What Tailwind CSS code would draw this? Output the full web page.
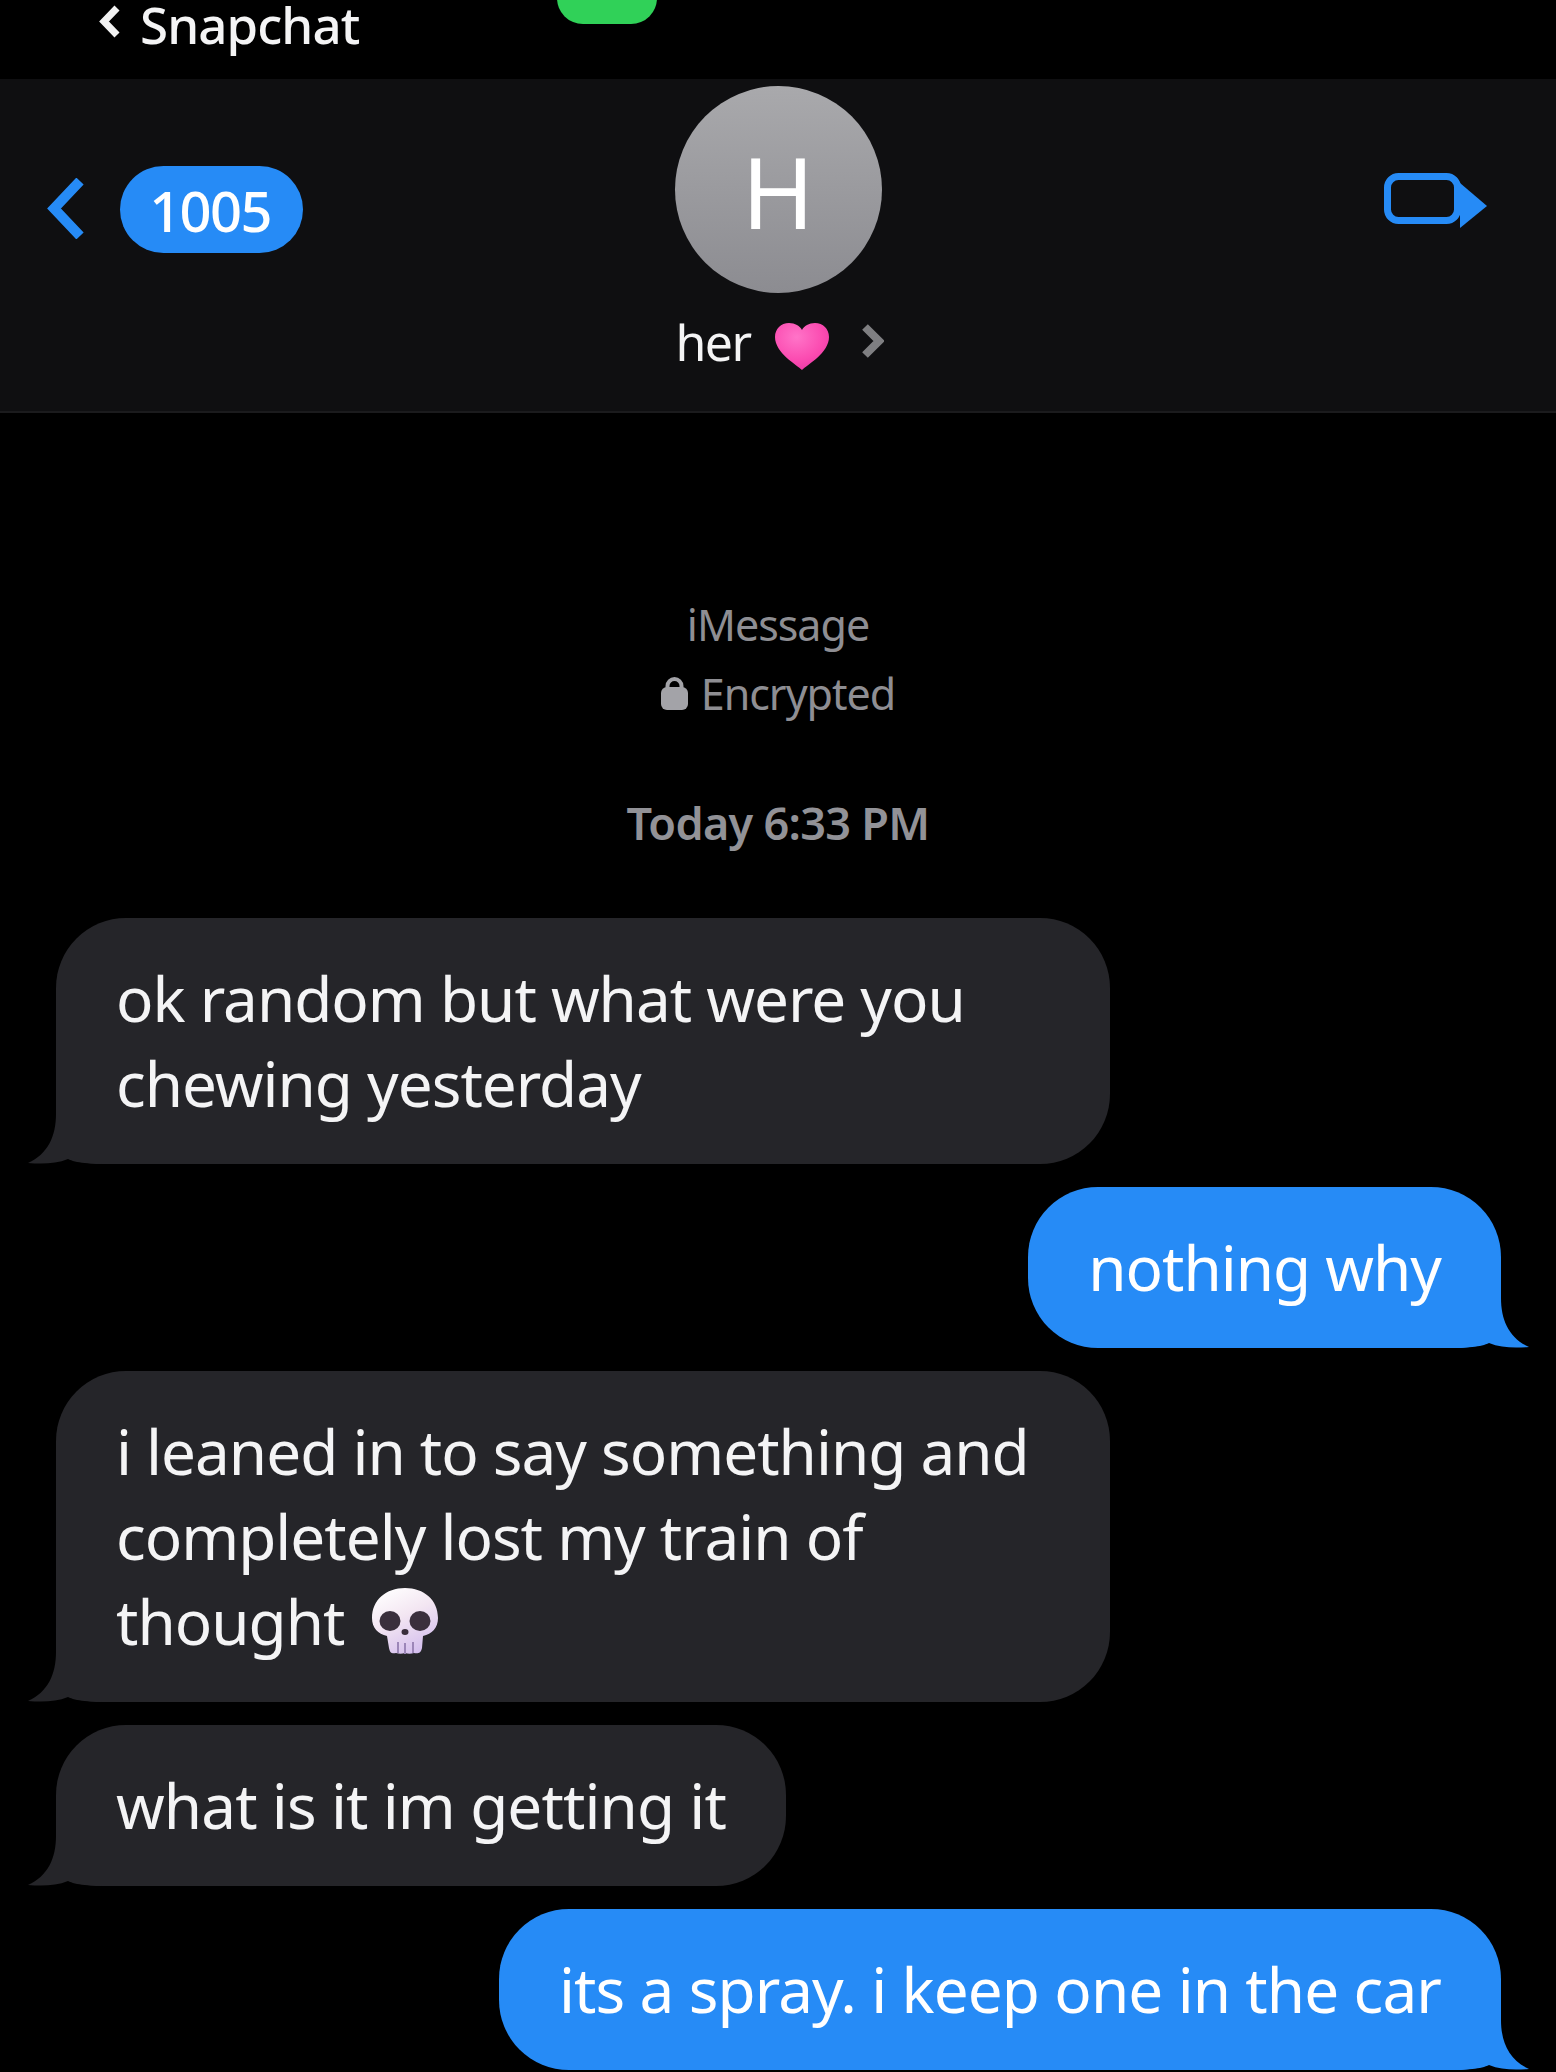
<!DOCTYPE html>
<html lang="en">
<head>
  <meta charset="UTF-8" />
  <meta name="viewport" content="width=device-width,initial-scale=1" />
  <title>Messages</title>
  <script src="https://cdn.jsdelivr.net/npm/@tailwindcss/browser@4"></script>
</head>
<body class="bg-black">
  <div class="w-[1556px] h-[2072px] overflow-hidden bg-black text-[#f4f4f5] font-['Noto_Sans',sans-serif]">

    <!-- status bar -->
    <div class="relative h-[79px] flex items-start pl-[98px]">
      <svg class="mt-[5px] w-[23px] h-[33px]" viewBox="0 0 23 33" fill="none"><path d="M19 3 L6 16.5 L19 30" stroke="#f2f2f2" stroke-width="7"/></svg>
      <span class="ml-[19px] text-[51px] leading-[48px] font-medium tracking-[-0.9px]">Snapchat</span>
      <div class="absolute left-[557px] -top-[30px] w-[100px] h-[54px] rounded-[26px] bg-[#30d158]"></div>
    </div>

    <!-- nav header -->
    <header class="h-[334px] bg-[#0f0f11] border-b-2 border-[#1b1b1d] grid grid-cols-[400px_1fr_400px]">
      <div class="flex items-start pl-[47px] pt-[87px]">
        <svg class="mt-[12px] w-[37px] h-[61px]" viewBox="0 0 37 61" fill="none"><path d="M33 3 L7 30.5 L33 58" stroke="#268bf6" stroke-width="10"/></svg>
        <span class="ml-[36px] w-[183px] h-[87px] rounded-full bg-[#268bf6] text-white text-[56px] leading-[89px] font-medium text-center tracking-[-1.6px] pr-[3px]">1005</span>
      </div>
      <div class="flex flex-col items-center pt-[7px]">
        <div class="w-[207px] h-[207px] rounded-full bg-gradient-to-b from-[#a9a9ac] to-[#8c8c91] flex items-center justify-center text-white text-[98px] leading-none font-normal pt-[2px]">H</div>
        <div class="mt-[15px] flex items-center pl-[4px]">
          <span class="text-[50px] leading-[68px] tracking-[-1.6px]">her</span>
          <svg class="ml-[25px] mt-[8px] w-[54px] h-[47px]" viewBox="0 0 54 47">
            <defs>
              <radialGradient id="heart" cx="0.4" cy="0.3" r="0.8"><stop offset="0" stop-color="#ff74c8"/><stop offset="0.6" stop-color="#fb4cb1"/><stop offset="1" stop-color="#e935a4"/></radialGradient>
            </defs>
            <path d="M27 47 C22 42 0 30 0 14 C0 6 6 0 14 0 C20 0 25 3 27 7 C29 3 34 0 40 0 C48 0 54 6 54 14 C54 30 32 42 27 47 Z" fill="url(#heart)"/>
          </svg>
          <svg class="ml-[32px] -mt-[3px] w-[23px] h-[34px]" viewBox="0 0 23 34" fill="none"><path d="M4 3 L18 17 L4 31" stroke="#7f7f82" stroke-width="8"/></svg>
        </div>
      </div>
      <div class="flex justify-end pr-[69px] pt-[94px]">
        <svg class="w-[103px] h-[55px]" viewBox="0 0 103 55">
          <rect x="3.5" y="3.5" width="70" height="44" rx="11" fill="none" stroke="#268bf6" stroke-width="7"/>
          <path d="M76 10 L103 33 L76 55 Z" fill="#268bf6"/>
        </svg>
      </div>
    </header>

    <!-- encryption note and time -->
    <div class="pt-[177px] flex flex-col items-center text-[#8e8e93]">
      <div class="text-[43px] leading-[69px] tracking-[-1px]">iMessage</div>
      <div class="flex items-center">
        <svg class="w-[27px] h-[33px] mr-[13px]" viewBox="0 0 27 33">
          <path d="M6.5 14 V9 a7 7 0 0 1 14 0 V14" fill="none" stroke="#a3a3a8" stroke-width="4"/>
          <rect x="0" y="10" width="27" height="23" rx="6" fill="#a3a3a8"/>
        </svg>
        <span class="text-[43px] leading-[69px] tracking-[-1px]">Encrypted</span>
      </div>
      <div class="mt-[60px] text-[45px] leading-[69px] font-semibold tracking-[-0.7px] text-[#929297]">Today 6:33 PM</div>
    </div>

    <!-- messages -->
    <main class="mt-[61px] flex flex-col gap-[23px] text-[62px] leading-[85px] tracking-[-1px]">
      <div class="relative self-start ml-[56px] w-[1054px] py-[38px] px-[60px] rounded-[70px] rounded-bl-[40px] bg-[#252529]">
        ok random but what were you<br />chewing yesterday
        <svg class="absolute -left-[28px] bottom-0 w-[90px] h-[50px]" viewBox="0 0 90 50"><path d="M28 0 C28 22 20 40 0 49 C14 50 28 50 40 45 C48 49 60 50 90 50 L90 0 Z" fill="#252529"/></svg>
      </div>
      <div class="relative self-end mr-[55px] py-[38px] px-[60px] rounded-[70px] rounded-br-[40px] bg-[#268bf6] text-white">
        nothing why
        <svg class="absolute -right-[28px] bottom-0 w-[90px] h-[50px]" viewBox="0 0 90 50"><path d="M62 0 C62 22 70 40 90 49 C76 50 62 50 50 45 C42 49 30 50 0 50 L0 0 Z" fill="#268bf6"/></svg>
      </div>
      <div class="relative self-start ml-[56px] w-[1054px] py-[38px] px-[60px] rounded-[70px] rounded-bl-[40px] bg-[#252529]">
        i leaned in to say something and<br />completely lost my train of<br />thought
        <svg class="inline-block ml-[13px] -mt-[14px] w-[66px] h-[66px] align-middle" viewBox="0 0 66 66">
          <defs>
            <linearGradient id="skull" x1="0.2" y1="0" x2="0.7" y2="1"><stop offset="0" stop-color="#ffffff"/><stop offset="0.45" stop-color="#f3e6f2"/><stop offset="1" stop-color="#d3bdee"/></linearGradient>
          </defs>
          <path d="M33 0 C52 0 66 12 66 30 C66 40 60 46 51 48 L50 60 C49 65 46 66 42 65 C39 66 36 66 33 65 C30 66 27 66 24 65 C20 66 18 65 17 60 L15 48 C6 46 0 40 0 30 C0 12 14 0 33 0 Z" fill="url(#skull)"/>
          <ellipse cx="18" cy="33" rx="10.5" ry="10" fill="#3a2f3c"/>
          <ellipse cx="48" cy="33" rx="10.5" ry="10" fill="#3a2f3c"/>
          <ellipse cx="33" cy="44" rx="3.5" ry="3" fill="#3a2f3c"/>
          <path d="M26 54 V65 M33 55 V66 M41 54 V65" stroke="#9c86b8" stroke-width="2"/>
        </svg>
        <svg class="absolute -left-[28px] bottom-0 w-[90px] h-[50px]" viewBox="0 0 90 50"><path d="M28 0 C28 22 20 40 0 49 C14 50 28 50 40 45 C48 49 60 50 90 50 L90 0 Z" fill="#252529"/></svg>
      </div>
      <div class="relative self-start ml-[56px] py-[38px] px-[60px] rounded-[70px] rounded-bl-[40px] bg-[#252529] tracking-[-0.9px]">
        what is it im getting it
        <svg class="absolute -left-[28px] bottom-0 w-[90px] h-[50px]" viewBox="0 0 90 50"><path d="M28 0 C28 22 20 40 0 49 C14 50 28 50 40 45 C48 49 60 50 90 50 L90 0 Z" fill="#252529"/></svg>
      </div>
      <div class="relative self-end mr-[55px] py-[38px] px-[60px] rounded-[70px] rounded-br-[40px] bg-[#268bf6] text-white tracking-[-0.9px]">
        its a spray. i keep one in the car
        <svg class="absolute -right-[28px] bottom-0 w-[90px] h-[50px]" viewBox="0 0 90 50"><path d="M62 0 C62 22 70 40 90 49 C76 50 62 50 50 45 C42 49 30 50 0 50 L0 0 Z" fill="#268bf6"/></svg>
      </div>
    </main>
  </div>
</body>
</html>
